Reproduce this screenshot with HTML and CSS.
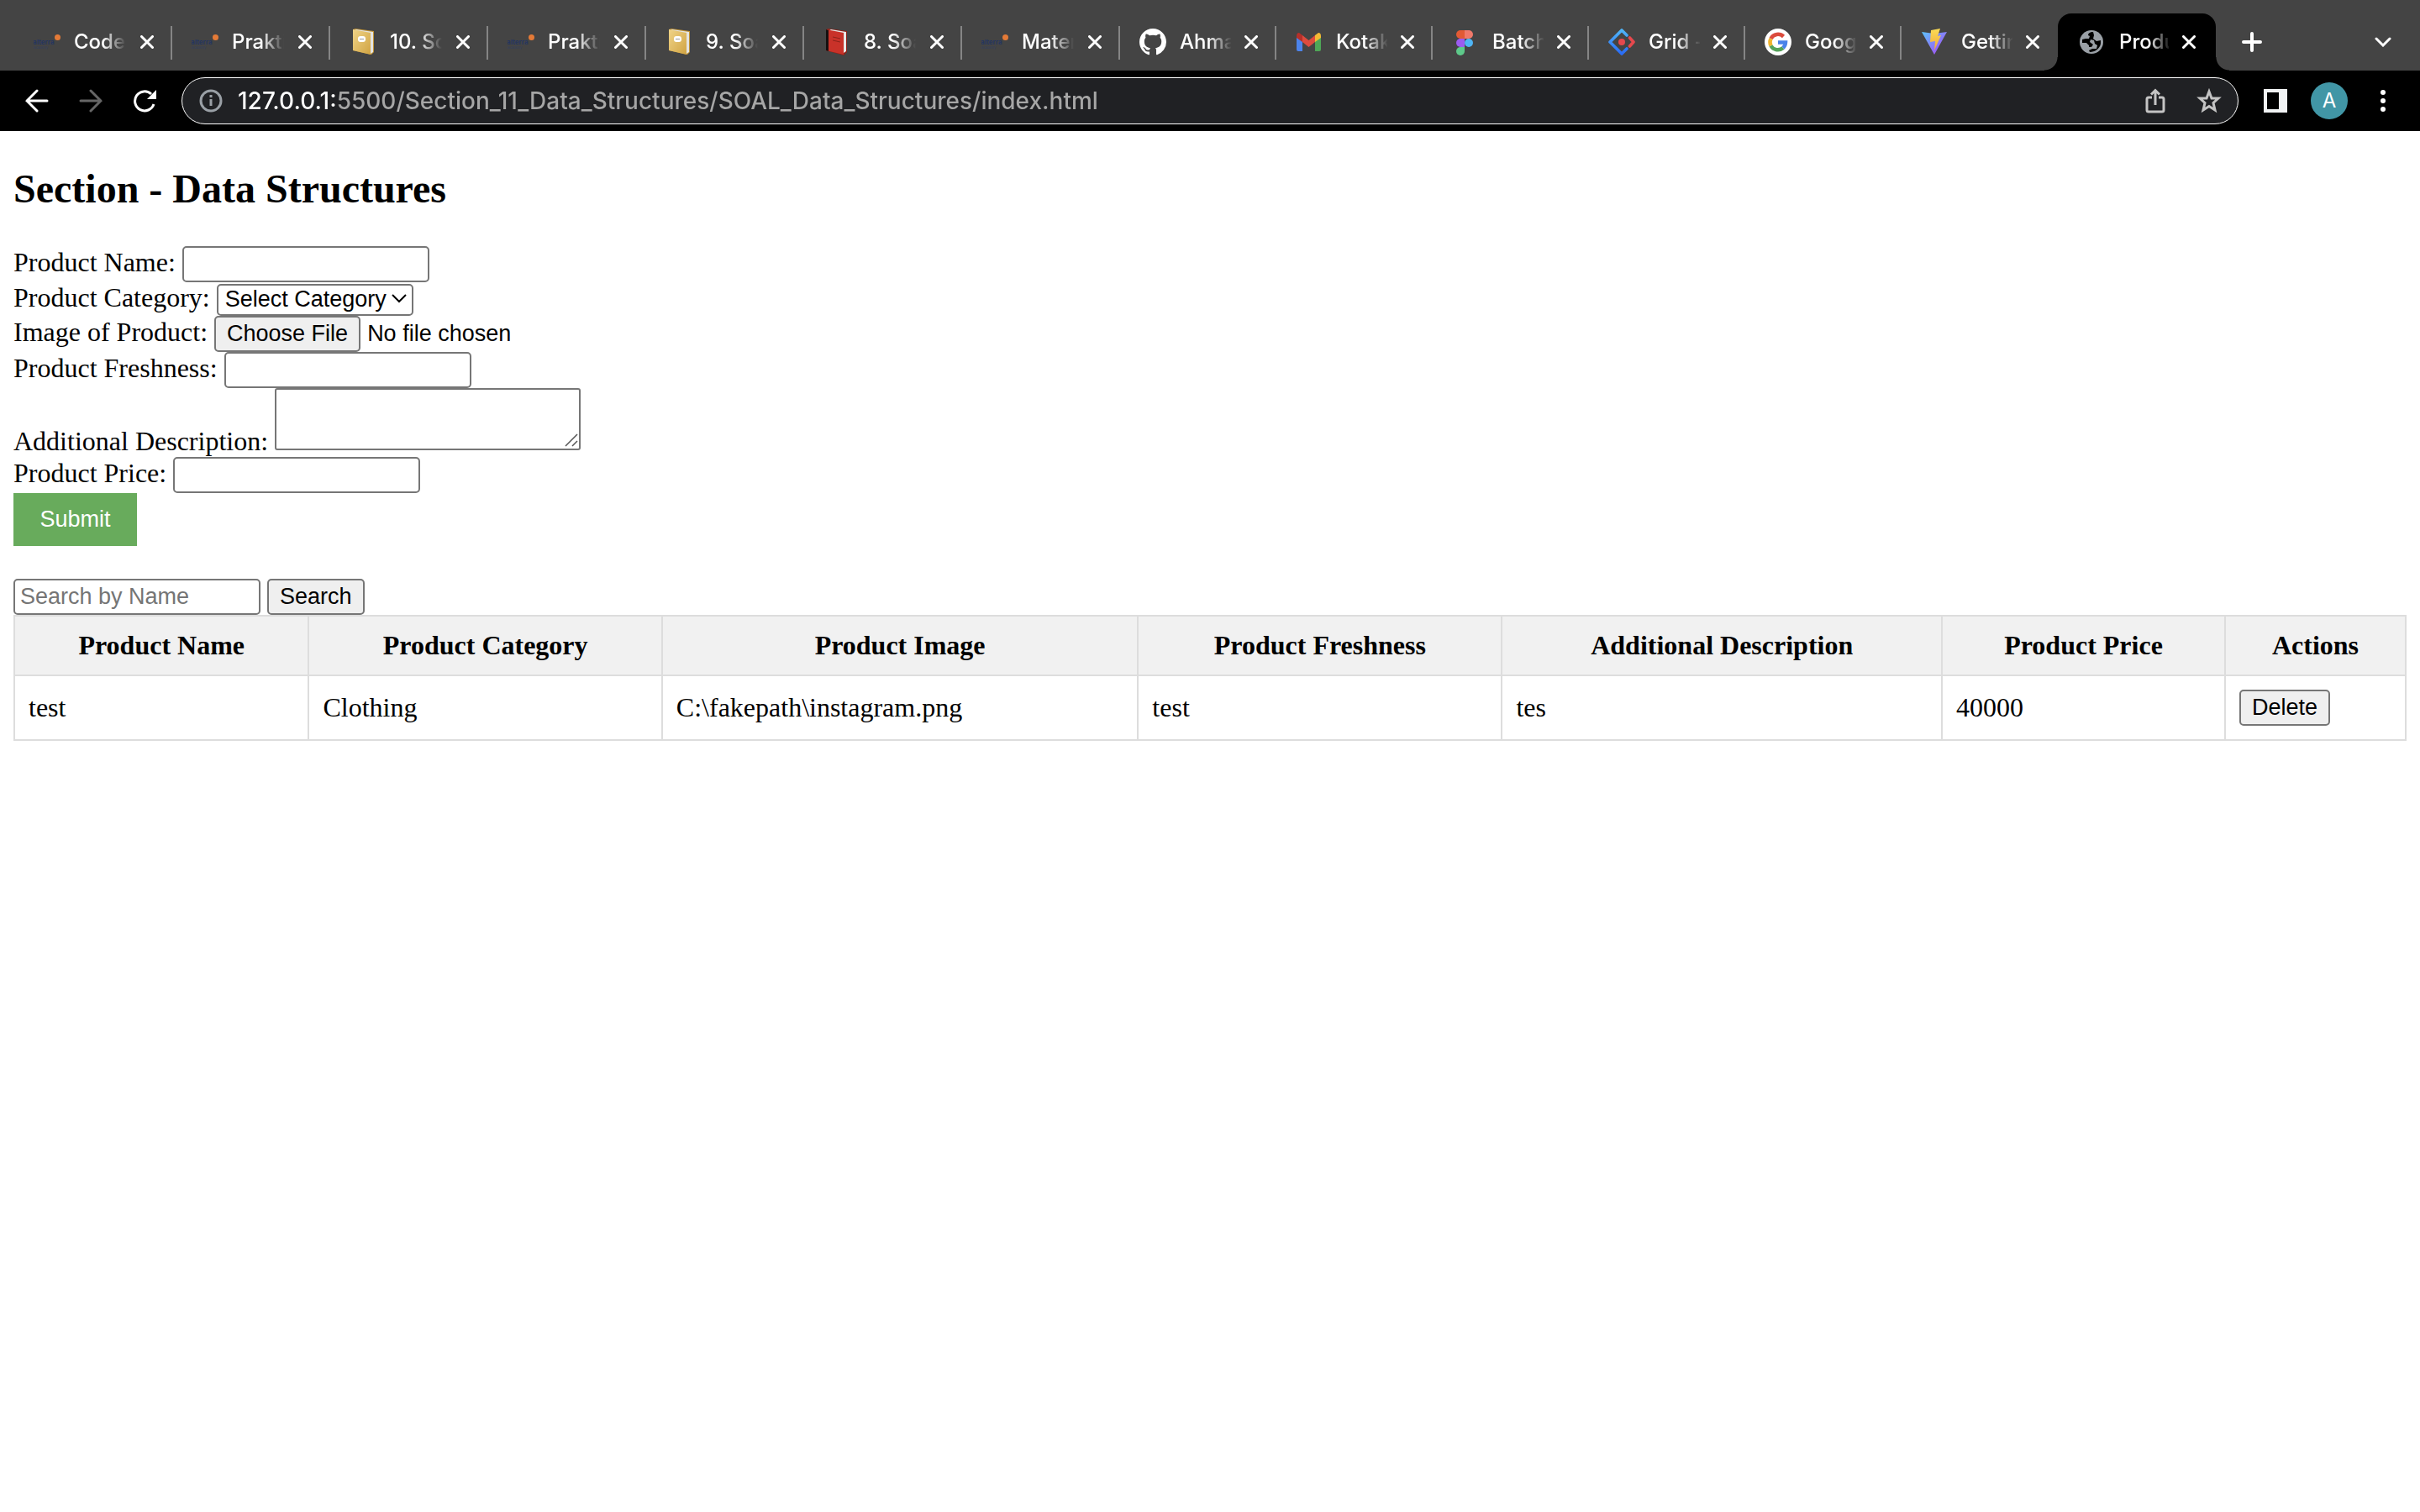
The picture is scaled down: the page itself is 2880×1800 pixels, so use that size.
FILE: index.html
```html
<!DOCTYPE html>
<html lang="en">
<head>
<meta charset="utf-8">
<title>Product</title>
<link rel="stylesheet" href="styles.css">
</head>
<body>
<svg class="defs" aria-hidden="true">
  <defs>
    <linearGradient id="gold" x1="0" y1="0" x2="1" y2="1"><stop offset="0" stop-color="#f0d488"/><stop offset="1" stop-color="#d0a342"/></linearGradient>
    <linearGradient id="antBlue" x1="0" y1="0" x2="0" y2="1"><stop offset="0" stop-color="#4fb4f7"/><stop offset="1" stop-color="#2a6cf6"/></linearGradient>
    <linearGradient id="vite" x1="0" y1="0" x2="1" y2="1"><stop offset="0" stop-color="#5cc4fa"/><stop offset="1" stop-color="#b03cf5"/></linearGradient>
    <linearGradient id="bolt" x1="0" y1="0" x2="0" y2="1"><stop offset="0" stop-color="#fbdc55"/><stop offset="1" stop-color="#f0a83c"/></linearGradient>
    <symbol id="i-close" viewBox="0 0 16 16"><path d="M1.500 1.500 14.500 14.500M14.500 1.500 1.500 14.500" stroke="#fff" stroke-width="3" stroke-linecap="round"/></symbol>
    <symbol id="i-alterra" viewBox="0 0 32 32">
      <circle cx="28.500" cy="10.500" r="3.500" fill="#e47a37"/>
      <text x="-1" y="19" font-family="Inter" font-size="8" font-weight="700" fill="#26365f">alterra</text>
      <text x="0" y="24" font-family="Inter" font-size="4" fill="#33405f">academy</text>
    </symbol>
    <symbol id="i-ledger" viewBox="0 0 32 32">
      <path d="M4 1 7 0 29 3V28L26 31 4 26Z" fill="#c29435"/><path d="M6 2 8 1 28 4V28L25 30Z" fill="#e4e4e2"/>
      <path d="M4 1 25 5V31L4 26Z" fill="url(#gold)"/><rect x="10" y="9" width="9" height="7" rx="3" fill="#fff"/><path d="M12 12.500h5" stroke="#999"/>
    </symbol>
    <symbol id="i-redbook" viewBox="0 0 32 32">
      <path d="M3 1 6 0 28 3V28L24 32 3 26Z" fill="#8d2219"/><path d="M7 2 9 1 27 4V27L24 29Z" fill="#e8e8e6"/>
      <path d="M3 1 24 5V31L3 26Z" fill="#c93229"/><path d="M3 1 6 2V27L3 26Z" fill="#151010"/><path d="M11 10 20 12M11 14 20 16" stroke="#8d2219"/>
    </symbol>
  </defs>
</svg>

<header class="browser">
  <div class="tabstrip">
    <div class="tab"><svg class="fav"><use href="#i-alterra"/></svg><a class="title" href="#">Code C</a><button class="close" aria-label="Close"><svg><use href="#i-close"/></svg></button></div>
    <div class="tab"><svg class="fav"><use href="#i-alterra"/></svg><a class="title" href="#">Prakti</a><button class="close" aria-label="Close"><svg><use href="#i-close"/></svg></button></div>
    <div class="tab"><svg class="fav"><use href="#i-ledger"/></svg><a class="title" href="#">10. So</a><button class="close" aria-label="Close"><svg><use href="#i-close"/></svg></button></div>
    <div class="tab"><svg class="fav"><use href="#i-alterra"/></svg><a class="title" href="#">Prakti</a><button class="close" aria-label="Close"><svg><use href="#i-close"/></svg></button></div>
    <div class="tab"><svg class="fav"><use href="#i-ledger"/></svg><a class="title" href="#">9. Soa</a><button class="close" aria-label="Close"><svg><use href="#i-close"/></svg></button></div>
    <div class="tab"><svg class="fav"><use href="#i-redbook"/></svg><a class="title" href="#">8. Soa</a><button class="close" aria-label="Close"><svg><use href="#i-close"/></svg></button></div>
    <div class="tab"><svg class="fav"><use href="#i-alterra"/></svg><a class="title" href="#">Mater</a><button class="close" aria-label="Close"><svg><use href="#i-close"/></svg></button></div>
    <div class="tab narrow"><svg class="fav" viewBox="0 0 16 16"><path fill="#fff" d="M8 0C3.580 0 0 3.580 0 8c0 3.540 2.290 6.530 5.470 7.590.4.070.55-.17.55-.38 0-.19-.010-.82-.010-1.490-2.010.37-2.530-.49-2.690-.94-.090-.23-.48-.94-.82-1.130-.28-.15-.68-.52-.010-.53.63-.010 1.080.58 1.230.82.72 1.210 1.870.87 2.330.66.070-.52.28-.87.51-1.070-1.780-.2-3.640-.89-3.640-3.950 0-.87.31-1.590.82-2.150-.080-.2-.36-1.020.080-2.120 0 0 .67-.21 2.200.82a7.600 7.600 0 0 1 4 0c1.530-1.040 2.200-.82 2.200-.82.44 1.100.16 1.920.080 2.120.51.56.82 1.270.82 2.150 0 3.070-1.870 3.750-3.650 3.950.29.25.54.73.54 1.480 0 1.070-.010 1.930-.010 2.200 0 .21.15.46.55.38A8.010 8.010 0 0 0 16 8c0-4.420-3.580-8-8-8z"/></svg><a class="title" href="#">Ahma</a><button class="close" aria-label="Close"><svg><use href="#i-close"/></svg></button></div>
    <div class="tab narrow"><svg class="fav" viewBox="0 0 32 32"><path d="M1 9V25Q1 27 3 27H8V15L1 9" fill="#4c84ec"/><path d="M30 9V25Q30 27 28 27H23V15L30 9" fill="#4fa657"/><path d="M8 8 15.500 14 23 8V16L15.500 22 8 16Z" fill="#dd4b3e"/><path d="M1 9Q1 5 4 5L8 8V16L1 11Z" fill="#b5302a"/><path d="M30 9Q30 5 27 5L23 8V16L30 11Z" fill="#f3b934"/></svg><a class="title" href="#">Kotak</a><button class="close" aria-label="Close"><svg><use href="#i-close"/></svg></button></div>
    <div class="tab narrow"><svg class="fav" viewBox="0 0 32 32"><path d="M15 2V12H10A5 5 0 0 1 10 2Z" fill="#e25a34"/><path d="M15 2H20A5 5 0 0 1 20 12H15Z" fill="#f0796a"/><path d="M15 12V22H10A5 5 0 0 1 10 12Z" fill="#9b5cf0"/><circle cx="20" cy="17" r="5" fill="#4fb5f5"/><path d="M10 22H15V27A5 5 0 1 1 10 22Z" fill="#5ec98a"/></svg><a class="title" href="#">Batch</a><button class="close" aria-label="Close"><svg><use href="#i-close"/></svg></button></div>
    <div class="tab narrow"><svg class="fav" viewBox="0 0 32 32"><g fill="none" stroke-width="3.600" stroke-linecap="round" stroke-linejoin="round"><path d="M22 8 16 2 2 16 16 30 22 24" stroke="url(#antBlue)"/><path d="M25.500 11 30 16 25.500 21" stroke="#e5484d"/></g><circle cx="16" cy="16" r="4" fill="#e5484d"/></svg><a class="title" href="#">Grid -</a><button class="close" aria-label="Close"><svg><use href="#i-close"/></svg></button></div>
    <div class="tab narrow"><svg class="fav" viewBox="0 0 32 32"><circle cx="16" cy="16" r="16" fill="#fff"/><g fill="none" stroke-width="4.500"><path d="M22.500 9.500A9.500 9.500 0 0 0 7.500 12" stroke="#db4b3d"/><path d="M7.500 12A9.500 9.500 0 0 0 7.500 20.500" stroke="#f0b52f"/><path d="M7.500 20.500A9.500 9.500 0 0 0 22 23" stroke="#54a259"/><path d="M22 23A9.500 9.500 0 0 0 25 16.500H16" stroke="#4a83e9"/></g></svg><a class="title" href="#">Goog</a><button class="close" aria-label="Close"><svg><use href="#i-close"/></svg></button></div>
    <div class="tab narrow last"><svg class="fav" viewBox="0 0 32 32"><path d="M1 4 16 6 31 4 16 31Z" fill="url(#vite)"/><path d="M12 2 23 0 20 9 24 8 16 26 17 15 11 16Z" fill="url(#bolt)"/></svg><a class="title" href="#">Gettin</a><button class="close" aria-label="Close"><svg><use href="#i-close"/></svg></button></div>
    <div class="tab active"><svg class="fav" viewBox="0 0 32 32"><circle cx="15" cy="16" r="14" fill="#9aa0a6"/><path d="M17 4C13 4 11 6 11 8L13 9 12 12 8 12 4 13 4 17 9 17 12 20 12 22 15 22 17 19 13 16 14 13 18 14 19 18 22 20 21 24 16 24 12 26 13 28C19 28 25 24 26 18L26 14 21 15 17 12 18 8Z" fill="#000"/></svg><a class="title" href="#">Produ</a><button class="close" aria-label="Close"><svg><use href="#i-close"/></svg></button></div>
    <button class="tool" aria-label="New tab"><svg width="24" height="24" viewBox="0 0 24 24"><path d="M12 2V22M2 12H22" stroke="#fff" stroke-width="4" stroke-linecap="round"/></svg></button>
    <button class="tool more" aria-label="Search tabs"><svg width="20" height="12" viewBox="0 0 20 12" fill="none"><path d="M2 2 10 10 18 2" stroke="#fff" stroke-width="3" stroke-linecap="round"/></svg></button>
  </div>
  <div class="toolbar">
    <button class="tool" aria-label="Back"><svg width="28" height="28" viewBox="0 0 28 28" fill="none" stroke="#fff" stroke-width="3" stroke-linecap="round"><path d="M14 2 2 14 14 26M2 14H26"/></svg></button>
    <button class="tool" aria-label="Forward"><svg width="28" height="28" viewBox="0 0 28 28" fill="none" stroke="#666" stroke-width="3" stroke-linecap="round"><path d="M14 2 26 14 14 26M26 14H2"/></svg></button>
    <button class="tool" aria-label="Reload"><svg width="28" height="28" viewBox="0 0 28 28"><path d="M25 18A11.500 11.500 0 1 1 22 6" fill="none" stroke="#fff" stroke-width="3"/><path d="M28 1V12H17Z" fill="#fff"/></svg></button>
    <div class="omnibox">
      <svg width="28" height="28" viewBox="0 0 28 28"><circle cx="14" cy="14" r="12" fill="none" stroke="#9aa0a6" stroke-width="3"/><path d="M14 12V20M14 7V10" stroke="#9aa0a6" stroke-width="3"/></svg>
      <input class="url" type="text" aria-label="Address" value="127.0.0.1:5500/Section_11_Data_Structures/SOAL_Data_Structures/index.html">
      <button class="tool" aria-label="Share"><svg width="24" height="30" viewBox="0 0 24 30" fill="none" stroke="#c4c4c4" stroke-width="3"><path d="M8 11H4Q2 11 2 13V26Q2 28 4 28H20Q22 28 22 26V13Q22 11 20 11H16M12 20V3M7 7.500 12 2.500 17 7.500"/></svg></button>
      <button class="tool" aria-label="Bookmark"><svg width="30" height="30" viewBox="0 0 30 30" fill="none" stroke="#c4c4c4" stroke-width="3"><path d="M15 4 18 12 26 12 20 17.500 22 26 15 21.500 8 26 10 17.500 4 12 12 12Z"/></svg></button>
    </div>
    <button class="tool" aria-label="Side panel"><svg width="28" height="28" viewBox="0 0 28 28"><path fill="#f1f3f4" fill-rule="evenodd" d="M0 0H28V28H0ZM4 4V24H18V4Z"/></svg></button>
    <button class="tool" aria-label="Profile"><span class="avatar">A</span></button>
    <button class="tool" aria-label="Menu"><svg width="6" height="28" viewBox="0 0 6 28" fill="#fff"><circle cx="3" cy="4" r="3"/><circle cx="3" cy="14" r="3"/><circle cx="3" cy="24" r="3"/></svg></button>
  </div>
</header>

<main class="page">
  <h2>Section - Data Structures</h2>
  <form>
    <div class="row"><label for="name">Product Name:</label> <input class="field" type="text" id="name"></div>
    <div class="row"><label for="category">Product Category:</label> <span class="overlay"><select id="category"><option>Select Category</option><option>Clothing</option></select><svg class="chevron" width="18" height="11" viewBox="0 0 18 11" fill="none"><path d="M1 1 9 9 17 1" stroke="#000" stroke-width="2"/></svg></span></div>
    <div class="row"><label for="image">Image of Product:</label> <input type="file" id="image"></div>
    <div class="row"><label for="freshness">Product Freshness:</label> <input class="field" type="text" id="freshness"></div>
    <div class="row"><label for="description">Additional Description:</label> <span class="overlay"><textarea id="description"></textarea><svg class="grip" width="16" height="16" viewBox="0 0 16 16"><path d="M1 15 15 1M9 15 15 9" stroke="#555" stroke-width="1.500"/></svg></span></div>
    <div class="row"><label for="price">Product Price:</label> <input class="field" type="text" id="price"></div>
    <button class="submit" type="button">Submit</button>
  </form>
  <div class="row search"><input class="field" type="text" placeholder="Search by Name" aria-label="Search by Name"> <button class="btn" type="button">Search</button></div>
  <table>
    <thead>
      <tr><th>Product Name</th><th>Product Category</th><th>Product Image</th><th>Product Freshness</th><th>Additional Description</th><th>Product Price</th><th>Actions</th></tr>
    </thead>
    <tbody>
      <tr><td>test</td><td>Clothing</td><td>C:\fakepath\instagram.png</td><td>test</td><td>tes</td><td>40000</td><td><button class="btn" type="button">Delete</button></td></tr>
    </tbody>
  </table>
</main>
</body>
</html>
```
FILE: styles.css
```css
* { box-sizing: border-box; }

body {
  margin: 0;
  background: #fff;
  color: #000;
  font: 32px/37px "Liberation Serif", "Times New Roman", serif;
}

.defs { position: absolute; width: 0; height: 0; }

/* Browser chrome */
.browser { background: #000; font-family: Inter, sans-serif; }
.browser button { border: 0; padding: 0; background: none; }
.browser svg { display: block; flex: none; }

.tabstrip {
  display: flex;
  align-items: flex-end;
  height: 84px;
  padding: 16px 12px 0 17px;
  background: #444;
}

.tab {
  position: relative;
  display: flex;
  align-items: center;
  flex: 0 1 188px;
  height: 68px;
  padding: 0 22px 0 23px;
  min-width: 0;
}
.tab.narrow { flex-basis: 186px; }
.tab::after {
  content: "";
  position: absolute;
  right: 0;
  top: 15px;
  width: 2px;
  height: 40px;
  background: #858585;
}
.tab.last::after { display: none; }

.tab.active {
  padding: 0 24px 0 25px;
  border-radius: 16px 16px 0 0;
  background: #000;
}
.tab.active::before,
.tab.active::after {
  content: "";
  position: absolute;
  top: auto;
  bottom: 0;
  width: 16px;
  height: 16px;
}
.tab.active::before { left: -16px; background: radial-gradient(circle at 0 0, #444 15px, #000 16px); }
.tab.active::after { right: -16px; background: radial-gradient(circle at 100% 0, #444 15px, #000 16px); }

.fav { width: 32px; height: 32px; }

.title {
  flex: 1;
  min-width: 0;
  margin-left: 16px;
  overflow: hidden;
  color: #fff;
  font-size: 24px;
  font-weight: 500;
  line-height: 32px;
  text-decoration: none;
  white-space: nowrap;
  -webkit-mask-image: linear-gradient(90deg, #000 34px, transparent 62px);
  mask-image: linear-gradient(90deg, #000 34px, transparent 62px);
}

.close { margin-left: 16px; }
.close svg { width: 16px; height: 16px; }

.tool {
  display: flex;
  align-items: center;
  justify-content: center;
  flex: none;
  width: 64px;
  height: 56px;
}
.tabstrip .tool { height: 68px; margin-left: 11px; }
.tabstrip .more { margin-left: auto; }

.toolbar {
  display: flex;
  align-items: center;
  height: 72px;
  padding: 0 12px;
}

.omnibox {
  display: flex;
  align-items: center;
  flex: 1;
  min-width: 0;
  height: 56px;
  margin: 0 12px;
  padding: 0 2px 0 20px;
  border: 1px solid #fff;
  border-radius: 28px;
  background: #202124;
}

.url {
  flex: 1;
  min-width: 0;
  height: 40px;
  margin-left: 18px;
  padding: 0;
  border: 0;
  font: 500 28px/40px Inter, sans-serif;
  color: transparent;
  background: linear-gradient(90deg, #fff 118px, #a6a6a6 118px);
  -webkit-background-clip: text;
  background-clip: text;
}

.avatar {
  width: 44px;
  height: 44px;
  border-radius: 50%;
  background: #4196a6;
  color: #fff;
  font: 24px/44px Inter, sans-serif;
  text-align: center;
}

/* Page */
.page { padding: 41px 16px; }

h2 { margin: 0 0 41px; font-size: 48px; line-height: 55px; }

input, select, textarea, .btn, .submit {
  font: 27px/31px "Liberation Sans", Arial, sans-serif;
  margin: 0;
}

.field {
  width: 294px;
  height: 43px;
  padding: 2px 6px;
  border: 2px solid #767676;
  border-radius: 5px;
}
.field::placeholder { color: #757575; }

.overlay { position: relative; }

select {
  appearance: none;
  width: 234px;
  height: 38px;
  padding: 0 8px;
  border: 2px solid #767676;
  border-radius: 5px;
  background: #fff;
  color: #000;
}
.chevron { position: absolute; right: 8px; top: 14px; }

input[type="file"] { height: 43px; }
input[type="file"]::file-selector-button {
  height: 43px;
  margin: 0 8px 0 0;
  padding: 2px 13px;
  border: 2px solid #767676;
  border-radius: 5px;
  background: #efefef;
  font: inherit;
}

textarea {
  width: 364px;
  height: 74px;
  padding: 4px;
  border: 2px solid #767676;
  border-radius: 3px;
  resize: none;
}
.grip { position: absolute; right: 3px; bottom: 11px; }

.submit {
  display: block;
  width: 147px;
  height: 63px;
  border: 0;
  background: #68ab5c;
  color: #fff;
}

.search { margin-top: 39px; }

.btn {
  height: 43px;
  padding: 2px 13px;
  border: 2px solid #767676;
  border-radius: 5px;
  background: #efefef;
  color: #000;
}

table { width: 100%; border-collapse: collapse; }
th, td { padding: 16px; border: 2px solid #ddd; text-align: left; }
th { background: #f1f1f1; text-align: center; }
```
